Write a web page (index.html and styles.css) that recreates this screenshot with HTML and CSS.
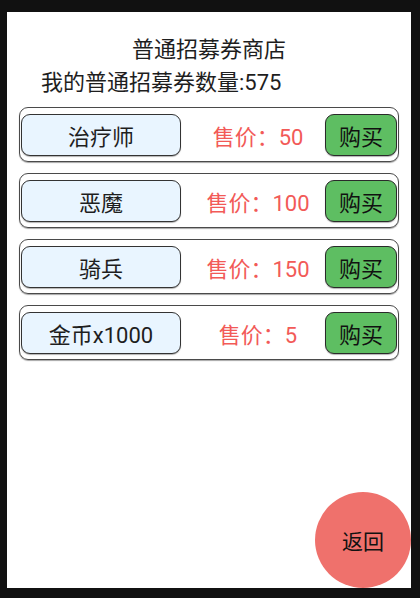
FILE: index.html
```html
<!DOCTYPE html>
<html>
<head>
<meta charset="utf-8">
<link rel="stylesheet" href="styles.css">
</head>
<body>
<div class="screen">
  <div class="title">普通招募券商店</div>
  <div class="count">我的普通招募券数量:575</div>
  <div class="list">
    <div class="row">
      <div class="name">治疗师</div>
      <div class="price">售价：50</div>
      <div class="buy">购买</div>
    </div>
    <div class="row">
      <div class="name">恶魔</div>
      <div class="price">售价：100</div>
      <div class="buy">购买</div>
    </div>
    <div class="row">
      <div class="name">骑兵</div>
      <div class="price">售价：150</div>
      <div class="buy">购买</div>
    </div>
    <div class="row">
      <div class="name">金币x1000</div>
      <div class="price">售价：5</div>
      <div class="buy">购买</div>
    </div>
  </div>
  <div class="back">返回</div>
</div>
</body>
</html>
```

FILE: styles.css
```css
html, body {
  margin: 0;
  padding: 0;
  background: #111111;
}
body {
  width: 420px;
  height: 598px;
  overflow: hidden;
  font-family: Roboto, "Noto Sans CJK SC", sans-serif;
  color: #1e1e1e;
}
.screen {
  position: relative;
  margin: 12px 0 0 7px;
  width: 404px;
  height: 576px;
  background: #ffffff;
  overflow: hidden;
}
.title {
  padding-top: 24px;
  line-height: 28px;
  font-size: 22px;
  text-align: center;
}
.count {
  margin-top: 5px;
  padding-left: 34px;
  line-height: 28px;
  font-size: 22px;
}
.list {
  margin-top: 10px;
  padding: 0 12px;
  display: flex;
  flex-direction: column;
  gap: 11px;
}
.row {
  display: flex;
  align-items: flex-start;
  height: 47px;
  padding: 6px 1px 0 1px;
  border: 1px solid #4a4a4a;
  border-radius: 9px;
  box-shadow: 0 1px 1px rgba(0,0,0,0.35);
}
.name {
  box-sizing: border-box;
  width: 160px;
  height: 42px;
  border: 1px solid #333;
  border-radius: 9px;
  background: #e9f5ff;
  box-shadow: 0 1px 1px rgba(0,0,0,0.3);
  display: flex;
  align-items: center;
  justify-content: center;
  font-size: 22px;
}
.price {
  flex: 1;
  height: 42px;
  padding-left: 10px;
  display: flex;
  align-items: center;
  justify-content: center;
  font-size: 22px;
  color: #f25a57;
}
.buy {
  box-sizing: border-box;
  width: 72px;
  height: 42px;
  border: 1px solid #2a2a2a;
  border-radius: 9px;
  background: #5ebe62;
  box-shadow: 0 1px 1px rgba(0,0,0,0.3);
  display: flex;
  align-items: center;
  justify-content: center;
  font-size: 22px;
  color: #111;
}
.back {
  position: absolute;
  right: 0;
  bottom: 0;
  width: 96px;
  height: 96px;
  border-radius: 50%;
  background: #ef716c;
  display: flex;
  align-items: center;
  justify-content: center;
  font-size: 21px;
  color: #111;
}
```
